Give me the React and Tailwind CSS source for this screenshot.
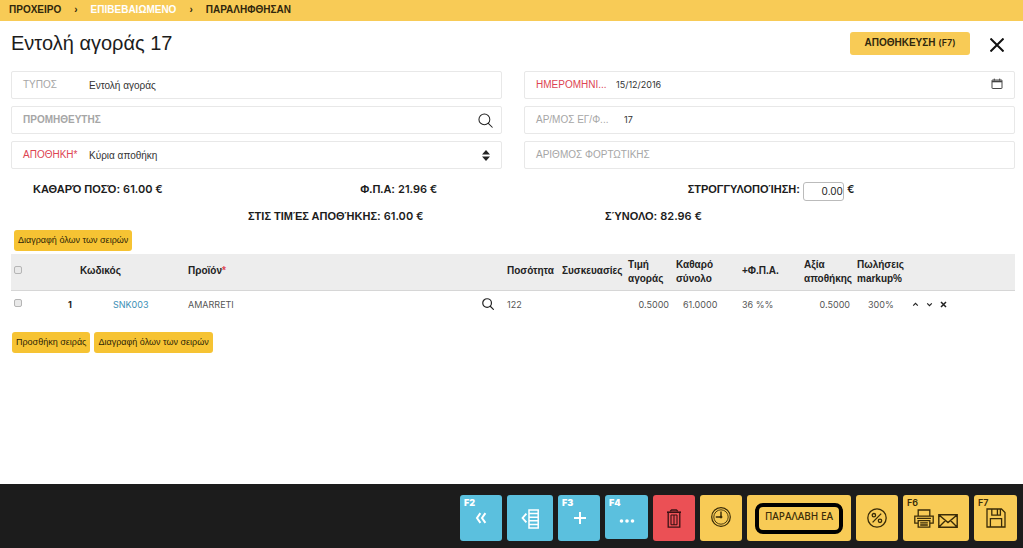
const LATIN = "font-['Inter','Liberation_Sans',sans-serif]"

const SearchIcon = ({ className }) => (
  <svg viewBox="0 0 16 16" className={className} fill="none" stroke="currentColor" strokeLinecap="round">
    <circle cx="6.8" cy="6.8" r="5.8" />
    <path d="M11 11 15.2 15.2" />
  </svg>
)

const CalendarIcon = () => (
  <svg viewBox="0 0 12 12" className="mb-0.5 h-3 w-3" fill="none" stroke="#444">
    <rect x="1" y="2" width="10" height="8.5" rx="0.5" />
    <path d="M1 3.5h10" strokeWidth="1.6" />
    <path d="M3.3 0.6v2M8.7 0.6v2" />
  </svg>
)

const Field = ({ id, label, value = '', required, bold, labelWidth = 'w-[66px]', children }) => (
  <div className="flex h-7 items-center rounded-xs border border-[#e8e8e8] pr-2 pl-[11px]">
    <label
      htmlFor={id}
      className={`shrink-0 pb-0.5 text-[10px] whitespace-nowrap ${labelWidth} ${required ? 'text-[#dd4452]' : 'text-[#a6a6a6]'} ${bold ? 'font-bold' : ''}`}
    >
      {label}
    </label>
    {children || <input id={id} type="text" defaultValue={value} className="min-w-0 flex-1 text-[10px] outline-none" />}
  </div>
)

const Total = ({ label, value, children }) => (
  <div className="flex h-5 items-center gap-[3px] text-[11px] font-bold whitespace-nowrap text-[#1c1c1c]">
    <span>{label}</span>
    {children}
    <span className={`font-semibold ${LATIN}`}>{value}</span>
  </div>
)

const RowButton = ({ children }) => (
  <button className="h-[21px] rounded-[3px] bg-[#f6c333] px-1 text-[9px] whitespace-nowrap text-[#2d2508]">
    {children}
  </button>
)

const tones = {
  blue: 'bg-[#5bc0de] text-white',
  red: 'bg-[#eb5055] text-[#3a1214]',
  yellow: 'bg-[#f8cb56] text-[#3a2c08]',
}

const ActionButton = ({ tone, hotkey, label, width = 'w-[42px]', height = 'h-[46px]', children }) => (
  <button
    aria-label={label}
    className={`relative flex items-center justify-center rounded-[3px] ${width} ${height} ${tones[tone]}`}
  >
    {hotkey && (
      <span className={`absolute top-[3px] left-1 text-[9px] leading-[10px] ${tone === 'blue' ? 'font-black' : 'font-semibold'} ${LATIN}`}>
        {hotkey}
      </span>
    )}
    {children}
  </button>
)

const Checkbox = ({ label }) => (
  <input
    type="checkbox"
    aria-label={label}
    className="ml-[3px] block h-2 w-2 appearance-none rounded-[2px] border border-[#b5b5b5] bg-[#e9e9e9]"
  />
)

const Breadcrumbs = () => (
  <nav className="flex h-[21px] items-center gap-[13px] bg-[#f8cb56] px-[9px] pb-0.5 text-[10px] font-bold text-[#30270d]">
    <a href="#draft">ΠΡΟΧΕΙΡΟ</a>
    <span>›</span>
    <a href="#confirmed" className="text-white">ΕΠΙΒΕΒΑΙΩΜΕΝΟ</a>
    <span>›</span>
    <a href="#received">ΠΑΡΑΛΗΦΘΗΣΑΝ</a>
  </nav>
)

const OrderLines = () => (
  <table className="mt-[3px] w-full table-fixed text-left text-[10px]">
    <colgroup>
      <col className="w-[57px]" />
      <col className="w-3" />
      <col className="w-[108px]" />
      <col />
      <col className="w-[55px]" />
      <col className="w-[66px]" />
      <col className="w-12" />
      <col className="w-[66px]" />
      <col className="w-[62px]" />
      <col className="w-[53px]" />
      <col className="w-[54px]" />
      <col className="w-[104px]" />
    </colgroup>
    <thead className="h-9 border-b border-[#d6d6d6] bg-[#ededed] leading-[14px] text-[#222]">
      <tr className="h-9">
        <th className="pb-1"><Checkbox label="Επιλογή όλων" /></th>
        <th></th>
        <th className="pb-0.5">Κωδικός</th>
        <th className="pb-0.5">Προϊόν<span className="text-[#dd4452]">*</span></th>
        <th className="pb-0.5">Ποσότητα</th>
        <th className="pb-0.5">Συσκευασίες</th>
        <th>Τιμή<br />αγοράς</th>
        <th>Καθαρό<br />σύνολο</th>
        <th className="pb-0.5">+Φ.Π.Α.</th>
        <th>Αξία<br />αποθήκης</th>
        <th className="whitespace-nowrap">Πωλήσεις<br />markup%</th>
        <th></th>
      </tr>
    </thead>
    <tbody className={`text-[#555] ${LATIN}`}>
      <tr className="h-7">
        <td className="pb-0.5"><Checkbox label="Επιλογή σειράς 1" /></td>
        <td className="text-[9px] font-bold text-[#222]">1</td>
        <td className="pl-[33px] text-[9px]"><a href="#SNK003" className="text-[#3c8fb5]">SNK003</a></td>
        <td className="text-[9px]">
          <div className="flex items-center justify-between pr-[13px]">
            AMARRETI
            <button aria-label="Αναζήτηση προϊόντος"><SearchIcon className="h-3 w-3 stroke-[1.6] text-[#222]" /></button>
          </div>
        </td>
        <td className="text-[9px]">122</td>
        <td></td>
        <td className="pr-[7px] text-right text-[9px]">0.5000</td>
        <td className="pl-[7px] text-[9px]">61.0000</td>
        <td className="text-[9px]">36 %%</td>
        <td className="pr-[7px] text-right text-[9px]">0.5000</td>
        <td className="pl-[11px] text-[9px]">300%</td>
        <td>
          <div className="flex gap-[7px] pl-px text-[#222]">
            <button aria-label="Πάνω">
              <svg viewBox="0 0 7 7" className="h-[7px] w-[7px]" fill="none" stroke="currentColor" strokeWidth="1.2"><path d="m1.2 4.6 2.3-2.2 2.3 2.2" /></svg>
            </button>
            <button aria-label="Κάτω">
              <svg viewBox="0 0 7 7" className="h-[7px] w-[7px]" fill="none" stroke="currentColor" strokeWidth="1.2"><path d="m1.2 2.4 2.3 2.2 2.3-2.2" /></svg>
            </button>
            <button aria-label="Διαγραφή">
              <svg viewBox="0 0 7 7" className="h-[7px] w-[7px]" fill="none" stroke="currentColor" strokeWidth="1.5"><path d="m1 1 5 5M6 1 1 6" /></svg>
            </button>
          </div>
        </td>
      </tr>
    </tbody>
  </table>
)

const Toolbar = () => (
  <footer className="flex h-16 items-start justify-end gap-[5px] bg-[#1c1c1c] pt-[11px] pr-1.5">
    <ActionButton tone="blue" hotkey="F2" label="Πίσω">
      <svg viewBox="0 0 12 12" className="h-3 w-3" fill="none" stroke="currentColor" strokeWidth="2">
        <path d="M5.4 1.2 2 6l3.4 4.8M10.4 1.2 7 6l3.4 4.8" />
      </svg>
    </ActionButton>
    <ActionButton tone="blue" label="Λίστα" width="w-[46px]">
      <svg viewBox="0 0 18 20" className="mt-0.5 h-5 w-[18px]" fill="none" stroke="currentColor" strokeWidth="1.5">
        <path d="M5.4 4.6 1.6 9l3.8 4.4" strokeWidth="1.9" />
        <rect x="8" y="1" width="9.2" height="18" />
        <path d="M8 4.6h9M8 8.2h9M8 11.8h9M8 15.4h9" />
      </svg>
    </ActionButton>
    <ActionButton tone="blue" hotkey="F3" label="Προσθήκη">
      <svg viewBox="0 0 12 12" className="ml-0.5 h-3 w-3" stroke="currentColor" strokeWidth="2"><path d="M6 0v12M0 6h12" /></svg>
    </ActionButton>
    <ActionButton tone="blue" hotkey="F4" label="Περισσότερα" width="w-[43px]" height="h-11">
      <svg viewBox="0 0 16 4" className="mt-2 h-1 w-4" fill="currentColor">
        <circle cx="2.5" cy="2" r="1.8" /><circle cx="8" cy="2" r="1.8" /><circle cx="13.5" cy="2" r="1.8" />
      </svg>
    </ActionButton>
    <ActionButton tone="red" label="Διαγραφή">
      <svg viewBox="0 0 14 19" className="h-[19px] w-3.5" fill="none" stroke="currentColor" strokeWidth="1.3">
        <path d="M3.2 2.2 4.6 1h4.8l1.4 1.2" strokeWidth="1.4" />
        <path d="M0 3.2h14" strokeWidth="1.6" />
        <path d="M1.2 4v14.2h11.6V4" />
        <path d="M4 6v9.8M7 6v9.8M10 6v9.8M4 6h6M4 15.8h6" strokeWidth="1.1" />
      </svg>
    </ActionButton>
    <ActionButton tone="yellow" label="Ιστορικό">
      <svg viewBox="0 0 20 20" className="mb-0.5 h-5 w-5" fill="none" stroke="currentColor">
        <circle cx="10" cy="10" r="9.3" strokeWidth="1.2" />
        <circle cx="10" cy="10" r="7.2" strokeWidth="0.9" />
        <path d="M10 4.5V10H4.8" strokeWidth="1.4" />
        <circle cx="10" cy="10" r="1" fill="currentColor" />
      </svg>
    </ActionButton>
    <ActionButton tone="yellow" width="w-[104px]">
      <span className="flex h-[31px] w-[88px] items-center justify-center rounded-lg border-4 border-black pb-1 font-['Noto_Sans',sans-serif] text-[10px] font-medium whitespace-nowrap">
        ΠΑΡΑΛΑΒΗ ΕΑ
      </span>
    </ActionButton>
    <ActionButton tone="yellow" label="Έκπτωση">
      <svg viewBox="0 0 20 20" className="h-5 w-5" fill="none" stroke="currentColor" strokeWidth="1.3">
        <circle cx="10" cy="10" r="9.2" />
        <circle cx="6.9" cy="7.2" r="1.7" />
        <circle cx="13" cy="12.8" r="1.7" />
        <path d="m14.2 5.6-8.6 8.8" />
      </svg>
    </ActionButton>
    <ActionButton tone="yellow" hotkey="F6" label="Εκτύπωση και αποστολή" width="w-[66px]">
      <span className="flex items-end gap-1">
        <svg viewBox="0 0 20 19" className="h-[19px] w-5" fill="none" stroke="currentColor" strokeWidth="1.3">
          <path d="M4.2 7V1h11.6v6M4 14.2H.8V7.2h18.4v7H16M3 9.4h14" />
          <path d="M4.2 11.6h11.6v6.6H4.2zM6.2 13.8h7.6M6.2 16h7.6" />
        </svg>
        <svg viewBox="0 0 20 14" className="h-3.5 w-5" fill="none" stroke="currentColor" strokeWidth="1.4">
          <path d="M.8.8h18.4v12.4H.8zM1 1l9 7.6L19 1M1 13l6.5-6.4M19 13l-6.5-6.4" />
        </svg>
      </span>
    </ActionButton>
    <ActionButton tone="yellow" hotkey="F7" label="Αποθήκευση" width="w-[43px]">
      <svg viewBox="0 0 20 20" className="h-5 w-5" fill="none" stroke="currentColor" strokeWidth="1.3">
        <path d="M1 1h14.5L19 4.5V19H1zM5.8 1v6.2h8.6V1M11.4 1v6M4.4 19v-8.4h11.2V19" />
      </svg>
    </ActionButton>
  </footer>
)

const App = () => {
  return (
    <div className="flex min-h-screen flex-col bg-white font-['Liberation_Sans',Arial,sans-serif] text-[#333]">
      <Breadcrumbs />

      <main className="flex-1 pr-2 pb-4 pl-[11px]">
        <header className="flex h-[50px] items-center justify-between pb-1.5">
          <h1 className="text-[20px] leading-7 text-[#1c1c1c]">Εντολή αγοράς 17</h1>
          <div className="flex items-center gap-5 pr-[11px]">
            <button className="h-[23px] w-[120px] rounded-[3px] bg-[#f8cb56] pb-0.5 text-[10px] font-bold text-[#30270d]">
              ΑΠΟΘΗΚΕΥΣΗ <span className={`text-[9px] font-semibold ${LATIN}`}>(F7)</span>
            </button>
            <button aria-label="Κλείσιμο" className="mt-1">
              <svg viewBox="0 0 14 14" className="h-3.5 w-3.5" stroke="#111" strokeWidth="2"><path d="m.5.5 13 13M13.5.5.5 13.5" /></svg>
            </button>
          </div>
        </header>

        <form className="grid grid-cols-2 gap-x-[22px] gap-y-[7px]">
          <Field id="type" label="ΤΥΠΟΣ" value="Εντολή αγοράς" />
          <Field id="date" label="ΗΜΕΡΟΜΗΝΙ..." required labelWidth="w-20">
            <input id="date" type="text" defaultValue="15/12/2016" className={`min-w-0 flex-1 text-[9px] outline-none ${LATIN}`} />
            <button type="button" aria-label="Ημερολόγιο" className="mr-[3px]"><CalendarIcon /></button>
          </Field>
          <Field id="supplier" label="ΠΡΟΜΗΘΕΥΤΗΣ" bold labelWidth="w-24">
            <input id="supplier" type="text" className="min-w-0 flex-1 text-[10px] outline-none" />
            <button type="button" aria-label="Αναζήτηση προμηθευτή"><SearchIcon className="h-[15px] w-[15px] stroke-[1.1] text-[#222]" /></button>
          </Field>
          <Field id="docnumber" label="ΑΡ/ΜΟΣ ΕΓ/Φ..." labelWidth="w-[88px]">
            <input id="docnumber" type="text" defaultValue="17" className={`min-w-0 flex-1 text-[9px] outline-none ${LATIN}`} />
          </Field>
          <Field id="warehouse" label="ΑΠΟΘΗΚΗ*" required>
            <select id="warehouse" className="min-w-0 flex-1 appearance-none text-[10px] outline-none">
              <option>Κύρια αποθήκη</option>
            </select>
            <svg viewBox="0 0 8 11" className="mr-[3px] h-[11px] w-2" fill="#222"><path d="M4 0 8 4.6H0zM4 11l4-4.6H0z" /></svg>
          </Field>
          <Field id="waybill" label="ΑΡΙΘΜΟΣ ΦΟΡΤΩΤΙΚΗΣ" labelWidth="w-32" />
        </form>

        <section className="mt-2.5">
          <div className="grid grid-cols-3 pl-[22px]">
            <Total label="ΚΑΘΑΡΌ ΠΟΣΌ:" value="61.00 €" />
            <Total label="Φ.Π.Α:" value="21.96 €" />
            <Total label={<label htmlFor="rounding">ΣΤΡΟΓΓΥΛΟΠΟΊΗΣΗ:</label>} value="€">
              <input
                id="rounding"
                type="text"
                defaultValue="0.00"
                className={`mt-1 h-[19px] w-[41px] rounded-[3px] border border-[#bbb] text-right text-[10px] font-normal ${LATIN}`}
              />
            </Total>
          </div>
          <div className="mt-[7px] grid grid-cols-[minmax(0,357px)_1fr] pl-[237px]">
            <Total label="ΣΤΙΣ ΤΙΜΈΣ ΑΠΟΘΉΚΗΣ:" value="61.00 €" />
            <Total label="ΣΎΝΟΛΟ:" value="82.96 €" />
          </div>
        </section>

        <div className="mt-1 flex pl-[3px]">
          <RowButton>Διαγραφή όλων των σειρών</RowButton>
        </div>

        <OrderLines />

        <div className="mt-3.5 flex gap-1 pl-px">
          <RowButton>Προσθήκη σειράς</RowButton>
          <RowButton>Διαγραφή όλων των σειρών</RowButton>
        </div>
      </main>

      <Toolbar />
    </div>
  )
}

export default App
